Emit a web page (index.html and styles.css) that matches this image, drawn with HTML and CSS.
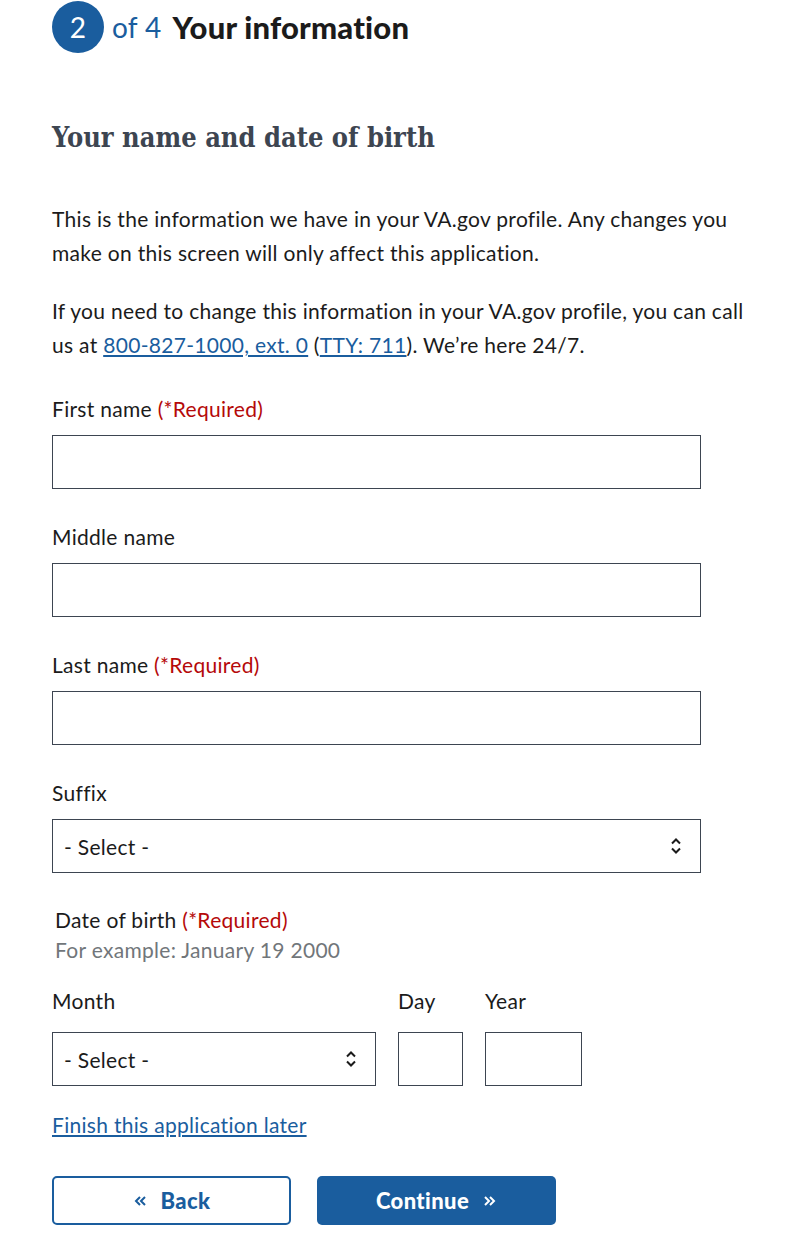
FILE: index.html
```html
<!DOCTYPE html>
<html lang="en">
<head>
<meta charset="utf-8">
<title>Your information</title>
<link rel="stylesheet" href="styles.css">
</head>
<body>
<main class="page">
  <div class="step">
    <span class="step-num">2</span>
    <span class="step-of">of 4</span>
    <span class="step-title">Your information</span>
  </div>

  <h2 class="section-title">Your name and date of birth</h2>

  <p class="text p1">This is the information we have in your VA.gov profile. Any changes you make on this screen will only affect this application.</p>
  <p class="text p2">If you need to change this information in your VA.gov profile, you can call us at <a href="#" class="link">800-827-1000, ext. 0</a> (<a href="#" class="link">TTY: 711</a>). We’re here 24/7.</p>

  <div class="field first">
    <label class="label">First name <span class="req">(*Required)</span></label>
    <div class="input"></div>
  </div>
  <div class="field">
    <label class="label">Middle name</label>
    <div class="input"></div>
  </div>
  <div class="field">
    <label class="label">Last name <span class="req">(*Required)</span></label>
    <div class="input"></div>
  </div>
  <div class="field">
    <label class="label">Suffix</label>
    <div class="input select">
      <span>- Select -</span>
      <svg class="chev" width="12" height="20" viewBox="0 0 12 20"><path d="M2 7.5 L6 3.5 L10 7.5 M2 12.5 L6 16.5 L10 12.5" fill="none" stroke="#1b1b1b" stroke-width="2"/></svg>
    </div>
  </div>

  <fieldset class="dob">
    <div class="legend">Date of birth <span class="req">(*Required)</span></div>
    <div class="hint">For example: January 19 2000</div>
    <div class="dob-row">
      <div class="dob-col month">
        <div class="label">Month</div>
        <div class="input select">
          <span>- Select -</span>
          <svg class="chev" width="12" height="20" viewBox="0 0 12 20"><path d="M2 7.5 L6 3.5 L10 7.5 M2 12.5 L6 16.5 L10 12.5" fill="none" stroke="#1b1b1b" stroke-width="2"/></svg>
        </div>
      </div>
      <div class="dob-col day">
        <div class="label">Day</div>
        <div class="input"></div>
      </div>
      <div class="dob-col year">
        <div class="label">Year</div>
        <div class="input"></div>
      </div>
    </div>
  </fieldset>

  <a href="#" class="link finish">Finish this application later</a>

  <div class="buttons">
    <button class="btn back"><svg width="14" height="14" viewBox="0 0 14 14"><path d="M7 3 L3 7 L7 11 M12 3 L8 7 L12 11" fill="none" stroke="#1a5d9e" stroke-width="2"/></svg><span>Back</span></button>
    <button class="btn cont"><span>Continue</span><svg width="14" height="14" viewBox="0 0 14 14"><path d="M2 3 L6 7 L2 11 M7 3 L11 7 L7 11" fill="none" stroke="#ffffff" stroke-width="2"/></svg></button>
  </div>
</main>
</body>
</html>
```

FILE: styles.css
```css
* { box-sizing: border-box; }
html, body { margin: 0; padding: 0; background: #fff; }
body {
  font-family: "Lato", "Liberation Sans", sans-serif;
  color: #1b1b1b;
  font-size: 21px;
  letter-spacing: 0.3px;
}
.page {
  padding: 0 52px;
  width: 800px;
}
.step {
  display: flex;
  align-items: center;
  height: 54px;
}
.step-num {
  width: 52px;
  height: 52px;
  border-radius: 50%;
  background: #1a5d9e;
  color: #fff;
  display: flex;
  align-items: center;
  justify-content: center;
  font-size: 28px;
  margin-right: 8px;
}
.step-of {
  color: #1a5d9e;
  font-size: 28px;
  margin-right: 11px;
}
.step-title {
  font-size: 31px;
  font-weight: 900;
  letter-spacing: 0.2px;
}
.section-title {
  font-family: "DejaVu Serif", serif;
  font-stretch: condensed;
  font-weight: 700;
  font-size: 27px;
  color: #3d4551;
  margin: 67px 0 0;
  line-height: 34px;
  letter-spacing: 0;
}
.text {
  margin: 0;
  line-height: 34px;
}
.p1 { margin-top: 47px; }
.p2 { margin-top: 24px; }
.link { color: #1a5d9e; text-decoration: underline; }
.req { color: #b50909; }
.field { margin-top: 33px; }
.field.first { margin-top: 32px; }
.label {
  display: block;
  line-height: 30px;
  margin-bottom: 11px;
}
.input {
  height: 54px;
  width: 649px;
  border: 1px solid #3d4551;
  background: #fff;
}
.select {
  display: flex;
  align-items: center;
  justify-content: space-between;
  padding: 0 18px 0 11px;
}
.chev { display: block; }
.dob {
  border: 0;
  margin: 32px 0 0;
  padding: 0;
}
.legend { line-height: 30px; padding-left: 3px; }
.hint { color: #71767a; line-height: 30px; padding-left: 3px; }
.dob-row {
  display: flex;
  gap: 22px;
  margin-top: 21px;
}
.dob-col .label { margin-bottom: 16px; }
.month .input { width: 324px; }
.day .input { width: 65px; }
.year .input { width: 97px; }
.finish {
  display: inline-block;
  margin-top: 24px;
  line-height: 30px;
}
.buttons {
  display: flex;
  gap: 26px;
  margin-top: 36px;
}
.btn {
  width: 239px;
  height: 49px;
  border-radius: 5px;
  font-family: inherit;
  font-size: 22px;
  font-weight: 900;
  letter-spacing: 0.4px;
  display: flex;
  align-items: center;
  justify-content: center;
  gap: 14px;
  cursor: pointer;
}
.back {
  background: #fff;
  border: 2px solid #1a5d9e;
  color: #1a5d9e;
}
.cont {
  background: #1a5d9e;
  border: 0;
  color: #fff;
}
```
